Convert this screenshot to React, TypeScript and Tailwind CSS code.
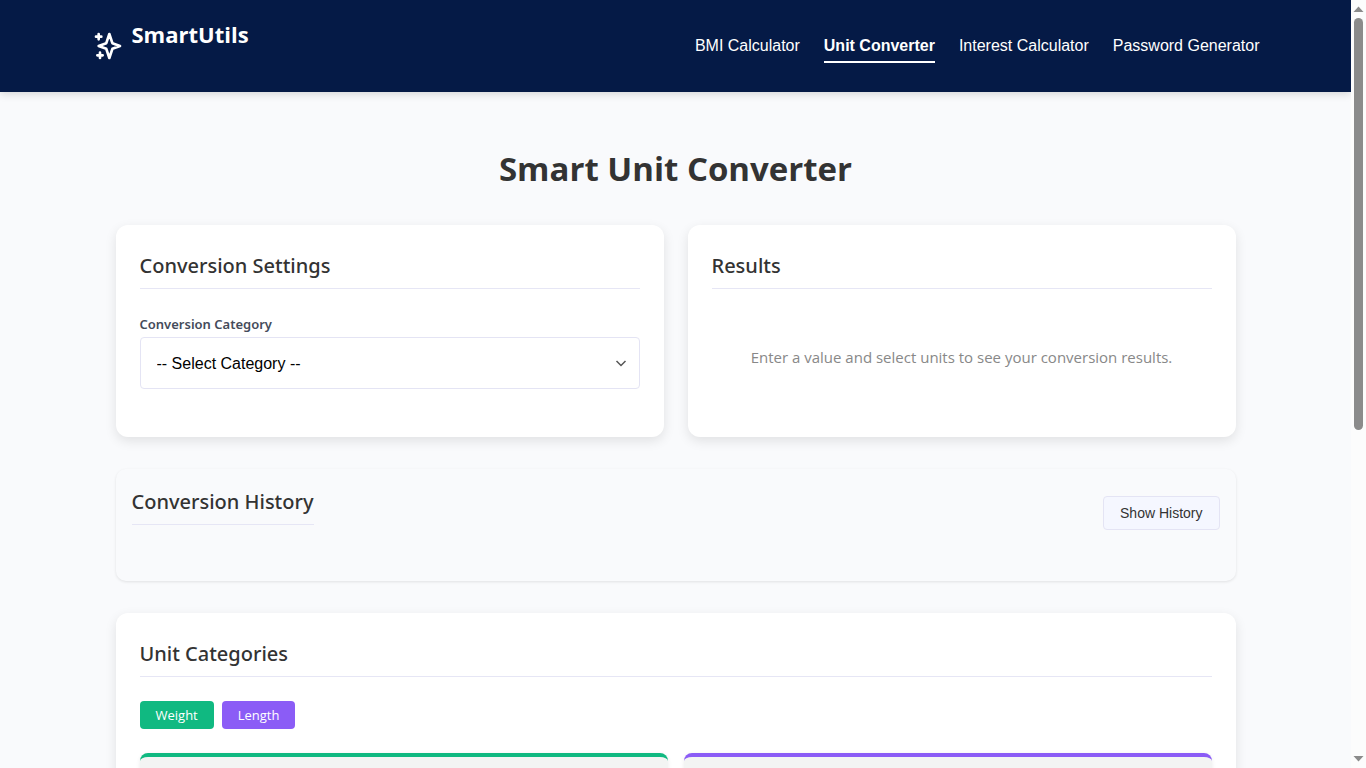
import type { ReactNode } from "react";

const navItems = [
  { label: "BMI Calculator", active: false },
  { label: "Unit Converter", active: true },
  { label: "Interest Calculator", active: false },
  { label: "Password Generator", active: false },
];

function SparklesIcon() {
  return (
    <svg
      className="size-8 shrink-0"
      viewBox="0 0 24 24"
      fill="none"
      stroke="currentColor"
      strokeWidth="2"
      strokeLinecap="round"
      strokeLinejoin="round"
      aria-hidden="true"
    >
      <path d="M5 3v4M3 5h4M6 17v4m-2-2h4m5-16l2.286 6.857L21 12l-5.714 2.143L13 21l-2.286-6.857L5 12l5.714-2.143L13 3z" />
    </svg>
  );
}

function Header() {
  return (
    <header className="relative bg-[#051a46] text-white shadow-[0_2px_8px_rgba(0,0,0,0.15)]">
      <div className="mx-auto flex h-[92px] max-w-[1200px] items-center justify-between px-4">
        <a href="#" className="flex items-center gap-2">
          <SparklesIcon />
          <span className="mb-6 text-[22px] leading-7 font-bold">SmartUtils</span>
        </a>
        <nav className="flex gap-6 font-['Liberation_Sans',sans-serif] text-base leading-6">
          {navItems.map((item) => (
            <a
              key={item.label}
              href="#"
              className={
                item.active
                  ? "border-b-2 border-white pt-[5px] pb-[3px] font-bold"
                  : "border-b-2 border-transparent pt-[5px] pb-[3px]"
              }
            >
              {item.label}
            </a>
          ))}
        </nav>
      </div>
    </header>
  );
}

function CardTitle({ children }: { children: ReactNode }) {
  return (
    <h2 className="border-b border-[#e6e6f5] pb-[5px] font-['Noto_Sans','Open_Sans',sans-serif] text-xl leading-[34px] font-medium text-[#333]">
      {children}
    </h2>
  );
}

const card = "rounded-xl bg-white p-6 shadow-[0_4px_12px_rgba(0,0,0,0.1)]";

function Scrollbar() {
  return (
    <div
      className="flex w-[15px] shrink-0 flex-col items-center justify-between bg-[#fcfcfc] py-1"
      aria-hidden="true"
    >
      <svg className="h-[10px] w-[11px]" viewBox="0 0 11 10">
        <path d="M5.5 2.5L10.5 8H0.5Z" fill="#8b8b8b" />
      </svg>
      <div className="mt-1 w-full grow px-[3px]">
        <div className="h-[56%] rounded-full bg-[#8b8b8b]" />
      </div>
      <svg className="h-[10px] w-[11px]" viewBox="0 0 11 10">
        <path d="M5.5 7.5L10.5 2H0.5Z" fill="#8b8b8b" />
      </svg>
    </div>
  );
}

export default function App() {
  return (
    <div className="flex h-screen overflow-hidden bg-[#f9fafc] font-['Open_Sans','Noto_Sans',sans-serif]">
      <div className="min-w-0 flex-1 overflow-hidden">
        <Header />
        <main className="mx-auto max-w-[1200px] px-10 pt-12">
          <h1 className="mb-7 text-center text-[33px] leading-[57px] font-bold text-[#333]">
            Smart Unit Converter
          </h1>

          <div className="mb-8 grid grid-cols-2 gap-6">
            <section className={card}>
              <CardTitle>Conversion Settings</CardTitle>
              <div className="mt-6 mb-6">
                <label
                  htmlFor="category"
                  className="mb-0.5 block font-['Noto_Sans','Open_Sans',sans-serif] text-[13px] leading-[22px] font-semibold text-[#444b5a]"
                >
                  Conversion Category
                </label>
                <div className="relative">
                  <select
                    id="category"
                    className="block h-[52px] w-full appearance-none rounded border border-[#e4e4f4] bg-white px-4 pt-0.5 font-['Liberation_Sans',sans-serif] text-base text-black"
                  >
                    <option>-- Select Category --</option>
                    <option>Weight</option>
                    <option>Length</option>
                  </select>
                  <svg
                    className="pointer-events-none absolute top-5 right-[13px] size-3"
                    viewBox="0 0 12 12"
                    fill="none"
                    stroke="#555"
                    strokeWidth="1.5"
                    aria-hidden="true"
                  >
                    <path d="M1.5 4L6 8.5L10.5 4" />
                  </svg>
                </div>
              </div>
            </section>

            <section className={card}>
              <CardTitle>Results</CardTitle>
              <p className="pt-14 pb-11 text-center text-[15px] leading-6 text-[#888]">
                Enter a value and select units to see your conversion results.
              </p>
            </section>
          </div>

          <section className="mb-8 flex h-28 items-start justify-between rounded-[10px] p-4 shadow-[0_1px_3px_rgba(0,0,0,0.1)]">
            <CardTitle>Conversion History</CardTitle>
            <button
              type="button"
              className="mt-[11px] rounded border border-[#e4e4f4] bg-[#f5f7ff] px-4 py-1.5 font-['Liberation_Sans',sans-serif] text-sm text-[#333]"
            >
              Show History
            </button>
          </section>

          <section className={card}>
            <CardTitle>Unit Categories</CardTitle>
            <div className="mt-6 flex gap-2 text-[13px] leading-5 font-medium text-white">
              <button type="button" className="rounded bg-[#10b981] px-4 py-1">
                Weight
              </button>
              <button type="button" className="rounded bg-[#8b5cf6] px-4 py-1">
                Length
              </button>
            </div>
            <div className="mt-6 grid grid-cols-2 gap-4">
              <div className="h-40 rounded-lg border-t-4 border-[#10b981] bg-[#f3f4f3] shadow-[0_1px_4px_rgba(0,0,0,0.08)]" />
              <div className="h-40 rounded-lg border-t-4 border-[#8b5cf6] bg-[#f3f4f3] shadow-[0_1px_4px_rgba(0,0,0,0.08)]" />
            </div>
          </section>
        </main>
      </div>
      <Scrollbar />
    </div>
  );
}
